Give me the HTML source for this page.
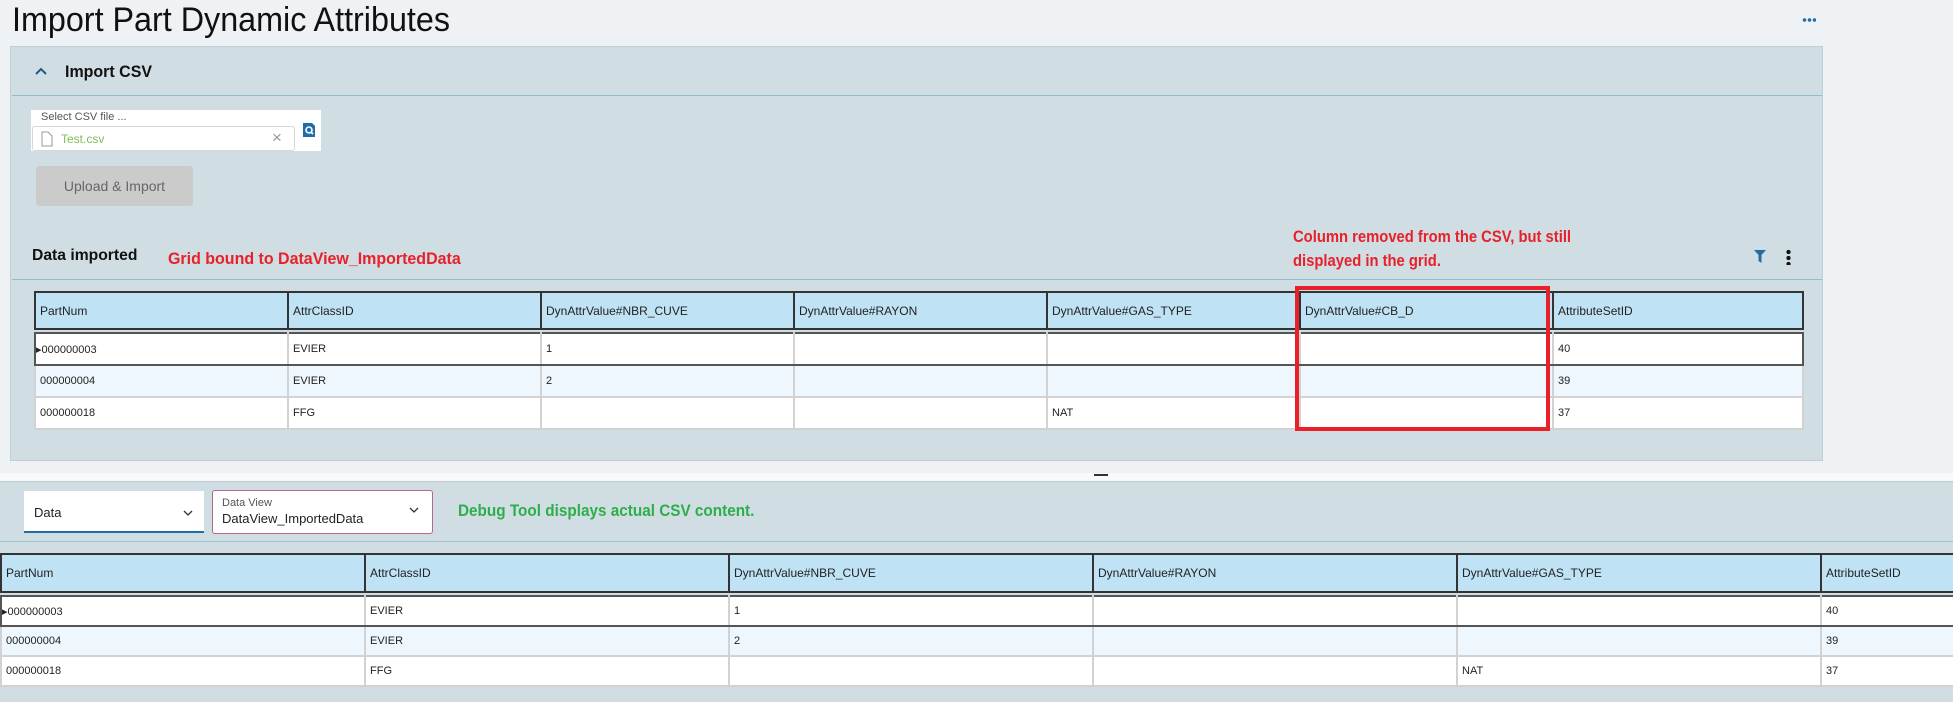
<!DOCTYPE html>
<html><head><meta charset="utf-8"><style>
*{box-sizing:border-box;margin:0;padding:0}
body{width:1953px;height:702px;overflow:hidden;background:#eef2f5;font-family:"Liberation Sans",sans-serif;position:relative;color:#222}
.a{position:absolute}
.t{white-space:nowrap}
.g{position:absolute;border-collapse:collapse;table-layout:fixed;font-size:11px}
.g td{border:2px solid #d2d2d2;padding:0 4px;white-space:nowrap;overflow:hidden}
.g tr.h td{background:#c0e2f5;border-color:#333;font-size:12px}
.g tr.s td{border-top:2px solid #555;border-bottom:2px solid #555}
.g tr.s td:first-child{border-left:2px solid #555}
.g tr.s td:last-child{border-right:2px solid #555}
.g tr.h td:first-child{border-left:2px solid #333}
.g tr.alt td{background:#edf7fd}
.g tr.w td{background:#fff}
</style></head><body>
<div class="a t" style="left:12px;top:1px;font-size:34px;color:#111;transform:scaleX(.95);transform-origin:0 0;font-weight:300">Import Part Dynamic Attributes</div>
<div class="a" style="left:1802px;top:18px;width:14px;height:4px;background:radial-gradient(circle,#1e6fa8 1.6px,transparent 2px) 0 0/5px 4px repeat-x"></div>

<div class="a" style="left:10px;top:46px;width:1813px;height:415px;background:#d0dee3;border:1px solid #c0cfd5"></div>
<svg class="a" style="left:35px;top:67px" width="12" height="8"><path d="M1 7 L6 2 L11 7" stroke="#1e5a80" stroke-width="2" fill="none"/></svg>
<div class="a t" style="left:65px;top:62px;font-size:17px;font-weight:bold;color:#111;transform:scaleX(.94);transform-origin:0 0">Import CSV</div>
<div class="a" style="left:12px;top:95px;width:1810px;height:1px;background:#8fbfcc"></div>

<div class="a" style="left:31px;top:110px;width:290px;height:41px;background:#fff"></div>
<div class="a t" style="left:41px;top:111px;font-size:11px;color:#555">Select CSV file ...</div>
<div class="a" style="left:32px;top:126px;width:263px;height:25px;border:1px solid #d8d8d8;border-radius:3px;background:#fff"></div>
<svg class="a" style="left:41px;top:131px" width="12" height="16"><path d="M1 1 H7 L11 5 V15 H1 Z" fill="#fff" stroke="#999"/></svg>
<div class="a t" style="left:61px;top:132px;font-size:12px;color:#7cbf5a">Test.csv</div>
<div class="a t" style="left:272px;top:128px;font-size:17px;color:#999">×</div>
<svg class="a" style="left:302px;top:122px" width="14" height="16"><path d="M1 1 H10 L13 4 V15 H1 Z" fill="#1e6fa8"/><circle cx="7" cy="8" r="3" fill="none" stroke="#fff" stroke-width="1.6"/><path d="M9 10 L11 12" stroke="#fff" stroke-width="1.6"/></svg>

<div class="a" style="left:36px;top:166px;width:157px;height:40px;background:#cbcbcb;border-radius:3px;text-align:center;line-height:40px;font-size:14px;color:#666">Upload &amp; Import</div>

<div class="a t" style="left:32px;top:247px;font-size:16px;font-weight:bold;color:#111;transform:scaleX(.98);transform-origin:0 0">Data imported</div>
<div class="a t" style="left:168px;top:249px;font-size:17px;font-weight:bold;color:#e8202a;transform:scaleX(.94);transform-origin:0 0">Grid bound to DataView_ImportedData</div>
<div class="a t" style="left:1293px;top:225px;font-size:17px;font-weight:bold;color:#e8202a;line-height:24px;transform:scaleX(.87);transform-origin:0 0">Column removed from the CSV, but still<br>displayed in the grid.</div>
<svg class="a" style="left:1754px;top:250px" width="12" height="13"><path d="M0 0 H12 L7.5 5 V13 L4.5 11 V5 Z" fill="#1e6fa8"/></svg>
<div class="a" style="left:1786px;top:249px;width:5px;height:16px;background:radial-gradient(circle,#111 2px,transparent 2.3px) 0 0/5px 6px repeat-y"></div>
<div class="a" style="left:12px;top:279px;width:1810px;height:1px;background:#8fbfcc"></div>

<table class="g" style="left:34px;top:291px;width:1768px">
<colgroup><col style="width:253px"><col style="width:253px"><col style="width:253px"><col style="width:253px"><col style="width:253px"><col style="width:253px"><col style="width:250px"></colgroup>
<tr class="h" style="height:37px"><td>PartNum</td><td>AttrClassID</td><td>DynAttrValue#NBR_CUVE</td><td>DynAttrValue#RAYON</td><td>DynAttrValue#GAS_TYPE</td><td>DynAttrValue#CB_D</td><td>AttributeSetID</td></tr>
<tr style="height:4px"><td colspan="7" style="border:none;background:#d0dee3;padding:0"></td></tr>
<tr class="w s" style="height:32px"><td style="padding-left:0">&#9656;000000003</td><td>EVIER</td><td>1</td><td></td><td></td><td></td><td>40</td></tr>
<tr class="alt" style="height:32px"><td>000000004</td><td>EVIER</td><td>2</td><td></td><td></td><td></td><td>39</td></tr>
<tr class="w" style="height:32px"><td>000000018</td><td>FFG</td><td></td><td></td><td>NAT</td><td></td><td>37</td></tr>
</table>
<div class="a" style="left:1295px;top:286px;width:255px;height:145px;border:4px solid #e8202a"></div>

<div class="a" style="left:0;top:473px;width:1953px;height:8px;background:#f8f9fa"></div>
<div class="a" style="left:1094px;top:474px;width:14px;height:2px;background:#333"></div>
<div class="a" style="left:0;top:481px;width:1953px;height:221px;background:#d0dee3;border-top:1px solid #bfcdd3"></div>

<div class="a" style="left:24px;top:491px;width:180px;height:42px;background:#fff;border-bottom:2px solid #1e6fa8"></div>
<div class="a t" style="left:34px;top:505px;font-size:13px">Data</div>
<svg class="a" style="left:183px;top:510px" width="10" height="6"><path d="M1 1 L5 5 L9 1" stroke="#333" fill="none" stroke-width="1.3"/></svg>
<div class="a" style="left:212px;top:490px;width:221px;height:44px;background:#fff;border:1px solid #b06a8a;border-radius:3px"></div>
<div class="a t" style="left:222px;top:497px;font-size:11px;color:#555">Data View</div>
<div class="a t" style="left:222px;top:511px;font-size:13px">DataView_ImportedData</div>
<svg class="a" style="left:409px;top:507px" width="10" height="6"><path d="M1 1 L5 5 L9 1" stroke="#333" fill="none" stroke-width="1.3"/></svg>
<div class="a t" style="left:458px;top:501px;font-size:17px;font-weight:bold;color:#2eae4a;transform:scaleX(.9);transform-origin:0 0">Debug Tool displays actual CSV content.</div>
<div class="a" style="left:0;top:541px;width:1953px;height:1px;background:#9cc3cf"></div>

<table class="g" style="left:0;top:553px;width:2184px">
<colgroup><col style="width:364px"><col style="width:364px"><col style="width:364px"><col style="width:364px"><col style="width:364px"><col style="width:364px"></colgroup>
<tr class="h" style="height:38px"><td>PartNum</td><td>AttrClassID</td><td>DynAttrValue#NBR_CUVE</td><td>DynAttrValue#RAYON</td><td>DynAttrValue#GAS_TYPE</td><td>AttributeSetID</td></tr>
<tr style="height:4px"><td colspan="6" style="border:none;background:#d0dee3;padding:0"></td></tr>
<tr class="w s" style="height:30px"><td style="padding-left:0">&#9656;000000003</td><td>EVIER</td><td>1</td><td></td><td></td><td>40</td></tr>
<tr class="alt" style="height:30px"><td>000000004</td><td>EVIER</td><td>2</td><td></td><td></td><td>39</td></tr>
<tr class="w" style="height:30px"><td>000000018</td><td>FFG</td><td></td><td></td><td>NAT</td><td>37</td></tr>
</table>
</body></html>
